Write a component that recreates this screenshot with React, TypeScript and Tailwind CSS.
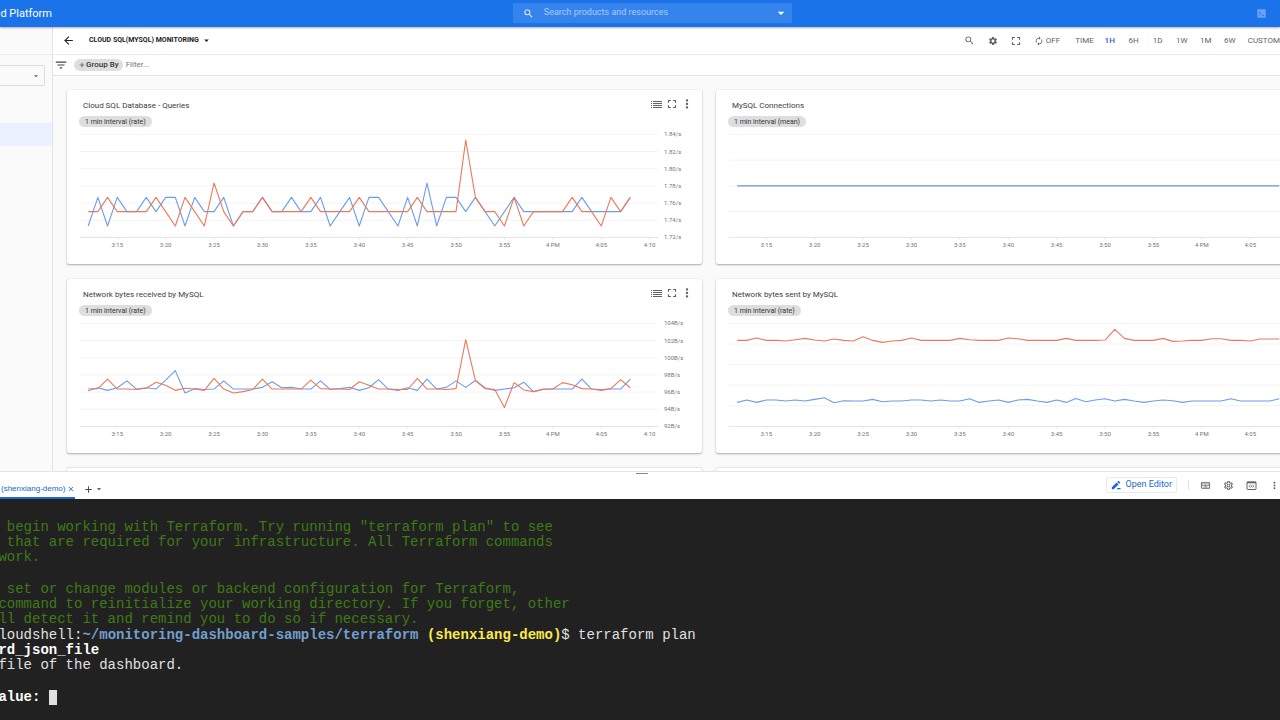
import React from 'react';
import {
  MdArrowBack,
  MdArrowDropDown,
  MdAutorenew,
  MdAdd,
  MdClose,
  MdFilterList,
  MdFullscreen,
  MdMoreVert,
  MdOutlineKeyboard,
  MdOutlineSettings,
  MdSearch,
  MdSettings,
} from 'react-icons/md';

const BLUE = '#6c9ceb';
const ORANGE = '#ea7a5c';

// One sample per minute, 3:12 to 4:08
const queries = {
  blue: [
    104, 106, 104, 106, 105, 105, 106, 105, 106, 106, 104, 106, 105, 105, 106, 104, 105, 105, 106, 105,
    105, 106, 105, 105, 106, 104, 105, 106, 104, 106, 106, 105, 104, 106, 104, 107, 104, 106, 106, 105,
    106, 105, 104, 105, 106, 105, 105, 105, 105, 105, 105, 106, 105, 105, 105, 105, 106,
  ],
  orange: [
    105, 105, 106, 105, 105, 105, 105, 106, 105, 104, 106, 105, 104, 107, 105, 104, 105, 105, 106, 105,
    105, 105, 105, 106, 105, 105, 105, 105, 106, 105, 105, 105, 105, 105, 106, 105, 105, 105, 105, 110,
    106, 105, 105, 104, 106, 104, 105, 105, 105, 105, 106, 105, 105, 104, 106, 105, 106,
  ],
};

const received = {
  blue: [
    96.15, 96.5, 96.2, 96.5, 97.3, 96.35, 96.5, 96.35, 97.4, 98.5, 95.9, 96.4, 96.3, 96.35, 97.3, 96.35, 96.35,
    96.35, 96.55, 97.2, 96.5, 96.55, 96.35, 96.35, 97.3, 96.3, 96.4, 96.55, 96.2, 96.5, 97.45, 96.35, 96.2, 96.5,
    96.2, 97.5, 96.35, 96.55, 97.3, 96.55, 97.35, 96.5, 96.2, 96.35, 96.5, 97.15, 96.05, 96.3, 96.35, 96.35,
    96.35, 97.5, 96.35, 96.3, 96.35, 96.35, 97.5,
  ],
  orange: [
    96.35, 96.4, 97.5, 96.35, 96.35, 96.3, 96.45, 97.15, 96.8, 96.2, 96.45, 96.35, 96.2, 97.6, 96.35, 95.9,
    96.05, 96.3, 97.5, 96.35, 96.35, 96.35, 96.35, 97.4, 96.4, 96.35, 96.35, 96.3, 97.2, 96.8, 96.35, 96.35,
    96.3, 96.3, 97.6, 96.35, 96.35, 96.3, 96.4, 102.1, 97.35, 96.4, 96.3, 94.2, 97.1, 96.25, 96.05, 96.35,
    96.35, 97.1, 96.85, 96.4, 96.35, 96.2, 96.4, 97.45, 96.5,
  ],
};

const sent = {
  blue: [
    72, 79, 72, 79, 79, 76, 79, 76, 81, 86, 71, 77, 76, 76, 81, 74, 76, 76, 79, 79, 76, 79, 76, 76, 83, 72, 76,
    79, 72, 79, 81, 76, 72, 79, 72, 84, 74, 79, 83, 76, 81, 76, 72, 76, 79, 77, 72, 76, 76, 76, 76, 83, 76, 76,
    76, 76, 83,
  ],
  orange: [
    258, 258, 265, 258, 258, 256, 260, 264, 259, 256, 262, 258, 256, 269, 258, 252, 256, 258, 265, 258, 258,
    258, 258, 264, 260, 258, 258, 258, 265, 263, 258, 258, 258, 258, 264, 258, 258, 258, 259, 291, 264, 258,
    258, 258, 264, 255, 256, 258, 258, 263, 263, 258, 258, 256, 262, 262, 262,
  ],
};

const times = ['3:15', '3:20', '3:25', '3:30', '3:35', '3:40', '3:45', '3:50', '3:55', '4 PM', '4:05', '4:10'];

type ChartData = {
  title: string;
  interval: string;
  min: number;
  max: number;
  rows: number;
  labels: string[];
  series: { color: string; values: number[] }[];
};

const charts: ChartData[] = [
  {
    title: 'Cloud SQL Database - Queries',
    interval: '1 min interval (rate)',
    min: 103.2,
    max: 110.4,
    rows: 6,
    labels: ['1.84/s', '1.82/s', '1.80/s', '1.78/s', '1.76/s', '1.74/s', '1.72/s'],
    series: [
      { color: BLUE, values: queries.blue },
      { color: ORANGE, values: queries.orange },
    ],
  },
  {
    title: 'MySQL Connections',
    interval: '1 min interval (mean)',
    min: 0,
    max: 4,
    rows: 4,
    labels: [],
    series: [{ color: '#6794cf', values: Array(57).fill(2) }],
  },
  {
    title: 'Network bytes received by MySQL',
    interval: '1 min interval (rate)',
    min: 92,
    max: 104,
    rows: 6,
    labels: ['104B/s', '102B/s', '100B/s', '98B/s', '96B/s', '94B/s', '92B/s'],
    series: [
      { color: BLUE, values: received.blue },
      { color: ORANGE, values: received.orange },
    ],
  },
  {
    title: 'Network bytes sent by MySQL',
    interval: '1 min interval (rate)',
    min: 0,
    max: 309,
    rows: 5,
    labels: [],
    series: [
      { color: BLUE, values: sent.blue },
      { color: ORANGE, values: sent.orange },
    ],
  },
];

const ranges = ['1H', '6H', '1D', '1W', '1M', '6W'];

const LegendIcon = () => (
  <svg viewBox="0 0 11 7" className="w-[11px] h-[7px]" fill="currentColor" shapeRendering="crispEdges" aria-hidden="true">
    {[0, 2, 4, 6].map((y) => (
      <g key={y}>
        <rect x="0" y={y} width="1" height="1" />
        <rect x="2" y={y} width="9" height="1" />
      </g>
    ))}
  </svg>
);

const ShellIcon = () => (
  <svg viewBox="0 0 9 9" className="w-[9px] h-[9px]" aria-hidden="true">
    <rect x="0.3" y="0.3" width="8.4" height="8.4" rx="1" fill="#6ba4f4" />
    <path d="M2 2.8 L4 4.6 L2 6.4 M5 6.6 H7" stroke="#1a73e8" strokeWidth="0.9" fill="none" />
  </svg>
);

const PencilIcon = () => (
  <svg viewBox="0 0 24 24" className="w-[10px] h-[10px]" fill="currentColor" aria-hidden="true">
    <path d="M2 17.5V22h4.5L18 10.5 13.5 6 2 17.500zM21.4 7.100c.5-.5.5-1.200 0-1.700l-2.800-2.800c-.5-.5-1.200-.5-1.700 0L14.800 4.700l4.500 4.500 2.100-2.100z" />
    <path d="M13 22l3-3h7v3z" />
  </svg>
);

const PreviewIcon = () => (
  <svg viewBox="0 0 11 11" className="w-[11px] h-[11px]" fill="none" stroke="currentColor" aria-hidden="true">
    <rect x="1" y="2" width="9" height="7.500" rx="0.5" />
    <path d="M1 2.500h9" strokeWidth="1.600" />
    <path d="M4.400 4.700L3.200 6.200l1.200 1.500M6.600 4.700l1.200 1.500-1.200 1.500" strokeWidth="0.8" />
    <circle cx="5.5" cy="6.200" r="0.700" fill="currentColor" stroke="none" />
  </svg>
);

const Chart = ({ data }: { data: ChartData }) => {
  const top = 7.4;
  const height = 103;
  const x = (i: number) => 21.2 + i * 9.68;
  const y = (v: number) => top + ((data.max - v) / (data.max - data.min)) * height;

  return (
    <svg viewBox="0 0 635 128" className="block w-full" role="img" aria-label={data.title}>
      {Array.from({ length: data.rows + 1 }, (_, i) => {
        const line = top + (height / data.rows) * i;
        return (
          <line key={i} x1="13" x2="591" y1={line} y2={line} stroke={i === data.rows ? '#e4e4e4' : '#f3f3f3'} />
        );
      })}
      {data.labels.map((label, i) => (
        <text key={label} x="597" y={top + (height / data.rows) * i + 2} fontSize="6" fill="#757575">
          {label}
        </text>
      ))}
      {times.map((time, i) => (
        <g key={time}>
          <line x1={x(3 + i * 5)} x2={x(3 + i * 5)} y1={top + height} y2={top + height + 2} stroke="#e4e4e4" />
          <text x={x(3 + i * 5)} y="120" fontSize="6" fill="#757575" textAnchor="middle">
            {time}
          </text>
        </g>
      ))}
      {data.series.map((s) => (
        <polyline
          key={s.color}
          points={s.values.map((v, i) => `${x(i)},${y(v)}`).join(' ')}
          fill="none"
          stroke={s.color}
          strokeWidth="1.1"
          strokeLinejoin="round"
        />
      ))}
    </svg>
  );
};

const ChartCard = ({ data }: { data: ChartData }) => (
  <section className="bg-white rounded-xs pt-[7px] pb-[9px] shadow-[0_1px_2px_rgba(0,0,0,0.3),0_0_1px_rgba(0,0,0,0.2)]">
    <div className="flex items-center h-3.5 pl-4 pr-2">
      <h2 className="pt-1 text-[8px] text-[#3c4043]">{data.title}</h2>
      <div className="flex items-center ml-auto text-[#616161]">
        <button aria-label="Legend" className="mr-[3px]"><LegendIcon /></button>
        <button aria-label="Full screen"><MdFullscreen size={14} /></button>
        <button aria-label="More options" className="ml-px"><MdMoreVert size={14} /></button>
      </div>
    </div>
    <div className="flex mt-[5px] pl-3">
      <span className="flex items-center h-[11px] pt-px px-1.5 rounded-full bg-[#dedede] text-[7px] text-[#333]">
        {data.interval}
      </span>
    </div>
    <Chart data={data} />
  </section>
);

const Header = () => (
  <header className="relative flex items-center h-[27px] shrink-0 bg-[#1a73e8] shadow-[0_1px_2px_rgba(0,0,0,0.3)]">
    <div className="flex justify-end w-[52px] pt-px overflow-hidden whitespace-nowrap text-[11px] text-white">
      ud Platform
    </div>
    <div className="flex items-center w-[279px] h-5 mb-px ml-[36%] px-2.5 bg-[#3584ee] text-white">
      <MdSearch size={11} />
      <input
        type="text"
        aria-label="Search products and resources"
        placeholder="Search products and resources"
        className="flex-1 min-w-0 ml-2.5 text-[9px] bg-transparent outline-none placeholder:text-[#a9cbf9]"
      />
      <button aria-label="Search options" className="-mr-[7px]"><MdArrowDropDown size={16} /></button>
    </div>
    <button aria-label="Activate Cloud Shell" className="ml-auto mr-3.5"><ShellIcon /></button>
  </header>
);

const Sidebar = () => (
  <nav className="w-[53px] shrink-0 bg-[#fafafa] border-r border-[#e4e4e4] overflow-hidden">
    <div className="h-[28px] border-b border-[#ececec]" />
    <div className="relative flex items-center mt-2.5 mr-[7px]">
      <select aria-label="Workspace" className="w-full h-[21px] appearance-none bg-[#fafafa] border border-l-0 border-[#dadce0] rounded-r-xs">
        <option value="" />
      </select>
      <MdArrowDropDown size={10} className="absolute right-1 text-[#666] pointer-events-none" />
    </div>
    <a href="#dashboards" aria-label="Dashboards" className="block h-[23px] mt-[37px] bg-[#ebf1fe]" />
  </nav>
);

const Toolbar = () => (
  <div className="flex items-center h-[28px] shrink-0 pl-[9px] bg-white border-b border-[#ececec] text-[8px] text-[#5f6368]">
    <button aria-label="Back" className="text-[#222]"><MdArrowBack size={13} /></button>
    <button className="flex items-center ml-3.5 text-[7px] font-bold text-[#202124]">
      CLOUD SQL(MYSQL) MONITORING
      <MdArrowDropDown size={11} className="ml-0.5" />
    </button>
    <div className="flex items-center ml-auto">
      <button aria-label="Search" className="flex justify-center w-6"><MdSearch size={11} /></button>
      <button aria-label="Settings" className="flex justify-center w-[22px]"><MdSettings size={10} /></button>
      <button aria-label="Full screen" className="flex justify-center w-6"><MdFullscreen size={14} /></button>
      <button className="flex items-center gap-0.5 ml-1.5 mr-[15px]"><MdAutorenew size={10} />OFF</button>
      <span className="mr-1">TIME</span>
      {ranges.map((range) => (
        <button key={range} className={range === '1H' ? 'w-6 font-medium text-[#1a5fd0]' : 'w-6'}>
          {range}
        </button>
      ))}
      <button className="ml-1.5">CUSTOM</button>
    </div>
  </div>
);

const FilterBar = () => (
  <div className="flex items-center h-[21px] shrink-0 pl-px bg-white border-b border-[#e4e4e4]">
    <MdFilterList size={14} className="text-[#444]" />
    <button className="flex items-center h-3 ml-1.5 px-1 rounded-full bg-[#dedede] text-[8px] font-medium text-[#333]">
      <MdAdd size={8} />
      Group By
    </button>
    <input
      type="text"
      aria-label="Filter"
      placeholder="Filter..."
      className="flex-1 min-w-0 ml-[3px] text-[8px] bg-transparent outline-none placeholder:text-[#757575]"
    />
  </div>
);

const ShellBar = () => (
  <div className="relative flex items-start h-[28px] shrink-0 bg-white border-t border-[#e4e4e4]">
    <div className="flex items-center self-end h-[18px] pl-px border-b-2 border-[#1967d2] font-['Liberation_Sans',sans-serif] text-[8px] text-[#1967d2]">
      <button>(shenxiang-demo)</button>
      <button aria-label="Close tab" className="ml-0.5"><MdClose size={8} /></button>
    </div>
    <div className="flex items-center self-end h-[18px] pb-0.5 ml-2 text-[#444]">
      <button aria-label="Add tab"><MdAdd size={11} /></button>
      <button aria-label="Tab options"><MdArrowDropDown size={10} /></button>
    </div>
    {/* drag handle */}
    <div className="absolute left-1/2 top-px w-3 h-px -ml-1 bg-[#888]" />
    <div className="flex items-center h-4 mt-[5px] ml-auto text-[#5f6368]">
      <button className="flex items-center gap-1 h-4 px-1 border border-[#e8eaed] rounded-xs text-[9px] text-[#1967d2]">
        <PencilIcon />
        Open Editor
      </button>
      <div className="w-px h-2.5 mx-[11px] bg-[#e0e0e0]" />
      <div className="flex items-center gap-3">
        <button aria-label="Send key combination"><MdOutlineKeyboard size={11} /></button>
        <button aria-label="Terminal settings"><MdOutlineSettings size={11} /></button>
        <button aria-label="Web preview"><PreviewIcon /></button>
        <button aria-label="More"><MdMoreVert size={11} /></button>
      </div>
    </div>
  </div>
);

const Terminal = () => (
  <div className="h-[221px] shrink-0 overflow-hidden bg-[#212121] pt-[21px] font-['Liberation_Mono',monospace] text-[14px] leading-[15px] text-[#e0e0e0] whitespace-pre">
    <div className="-ml-2.5">
      <div className="text-[#3f7a17]">
        <p>{'w begin working with Terraform. Try running "terraform plan" to see'}</p>
        <p>{'s that are required for your infrastructure. All Terraform commands'}</p>
        <p>{' work.'}</p>
      </div>
      <div className="mt-[17px] text-[#3f7a17]">
        <p>{'r set or change modules or backend configuration for Terraform,'}</p>
        <p>{' command to reinitialize your working directory. If you forget, other'}</p>
        <p>{'ill detect it and remind you to do so if necessary.'}</p>
      </div>
      <div className="mt-px">
        <p>
          cloudshell:
          <span className="font-bold text-[#729fcf]">~/monitoring-dashboard-samples/terraform</span>{' '}
          <span className="font-bold text-[#fce94f]">(shenxiang-demo)</span>$ terraform plan
        </p>
        <p className="font-bold text-white">ard_json_file</p>
        <p>{' file of the dashboard.'}</p>
      </div>
      <p className="flex mt-[17px] font-bold text-white">
        {'value: '}
        <span className="w-2 h-[15px] bg-[#e0e0e0]" />
      </p>
    </div>
  </div>
);

const App = () => {
  return (
    <div className="flex flex-col h-screen overflow-hidden bg-[#fafafa] font-[Roboto,sans-serif]">
      <Header />
      <div className="flex flex-1 min-h-0">
        <Sidebar />
        <main className="flex flex-col flex-1 min-w-0 overflow-hidden">
          <Toolbar />
          <FilterBar />
          {/* The grid runs past the right edge of the window */}
          <div className="grid grid-cols-2 gap-x-3.5 gap-y-[15px] pt-3.5 pl-3.5 -mr-[71px]">
            {charts.map((chart) => (
              <ChartCard key={chart.title} data={chart} />
            ))}
            <div className="h-10 bg-white rounded-xs shadow-[0_0_2px_rgba(0,0,0,0.3)]" />
            <div className="h-10 bg-white rounded-xs shadow-[0_0_2px_rgba(0,0,0,0.3)]" />
          </div>
        </main>
      </div>
      <ShellBar />
      <Terminal />
    </div>
  );
};

export default App;
